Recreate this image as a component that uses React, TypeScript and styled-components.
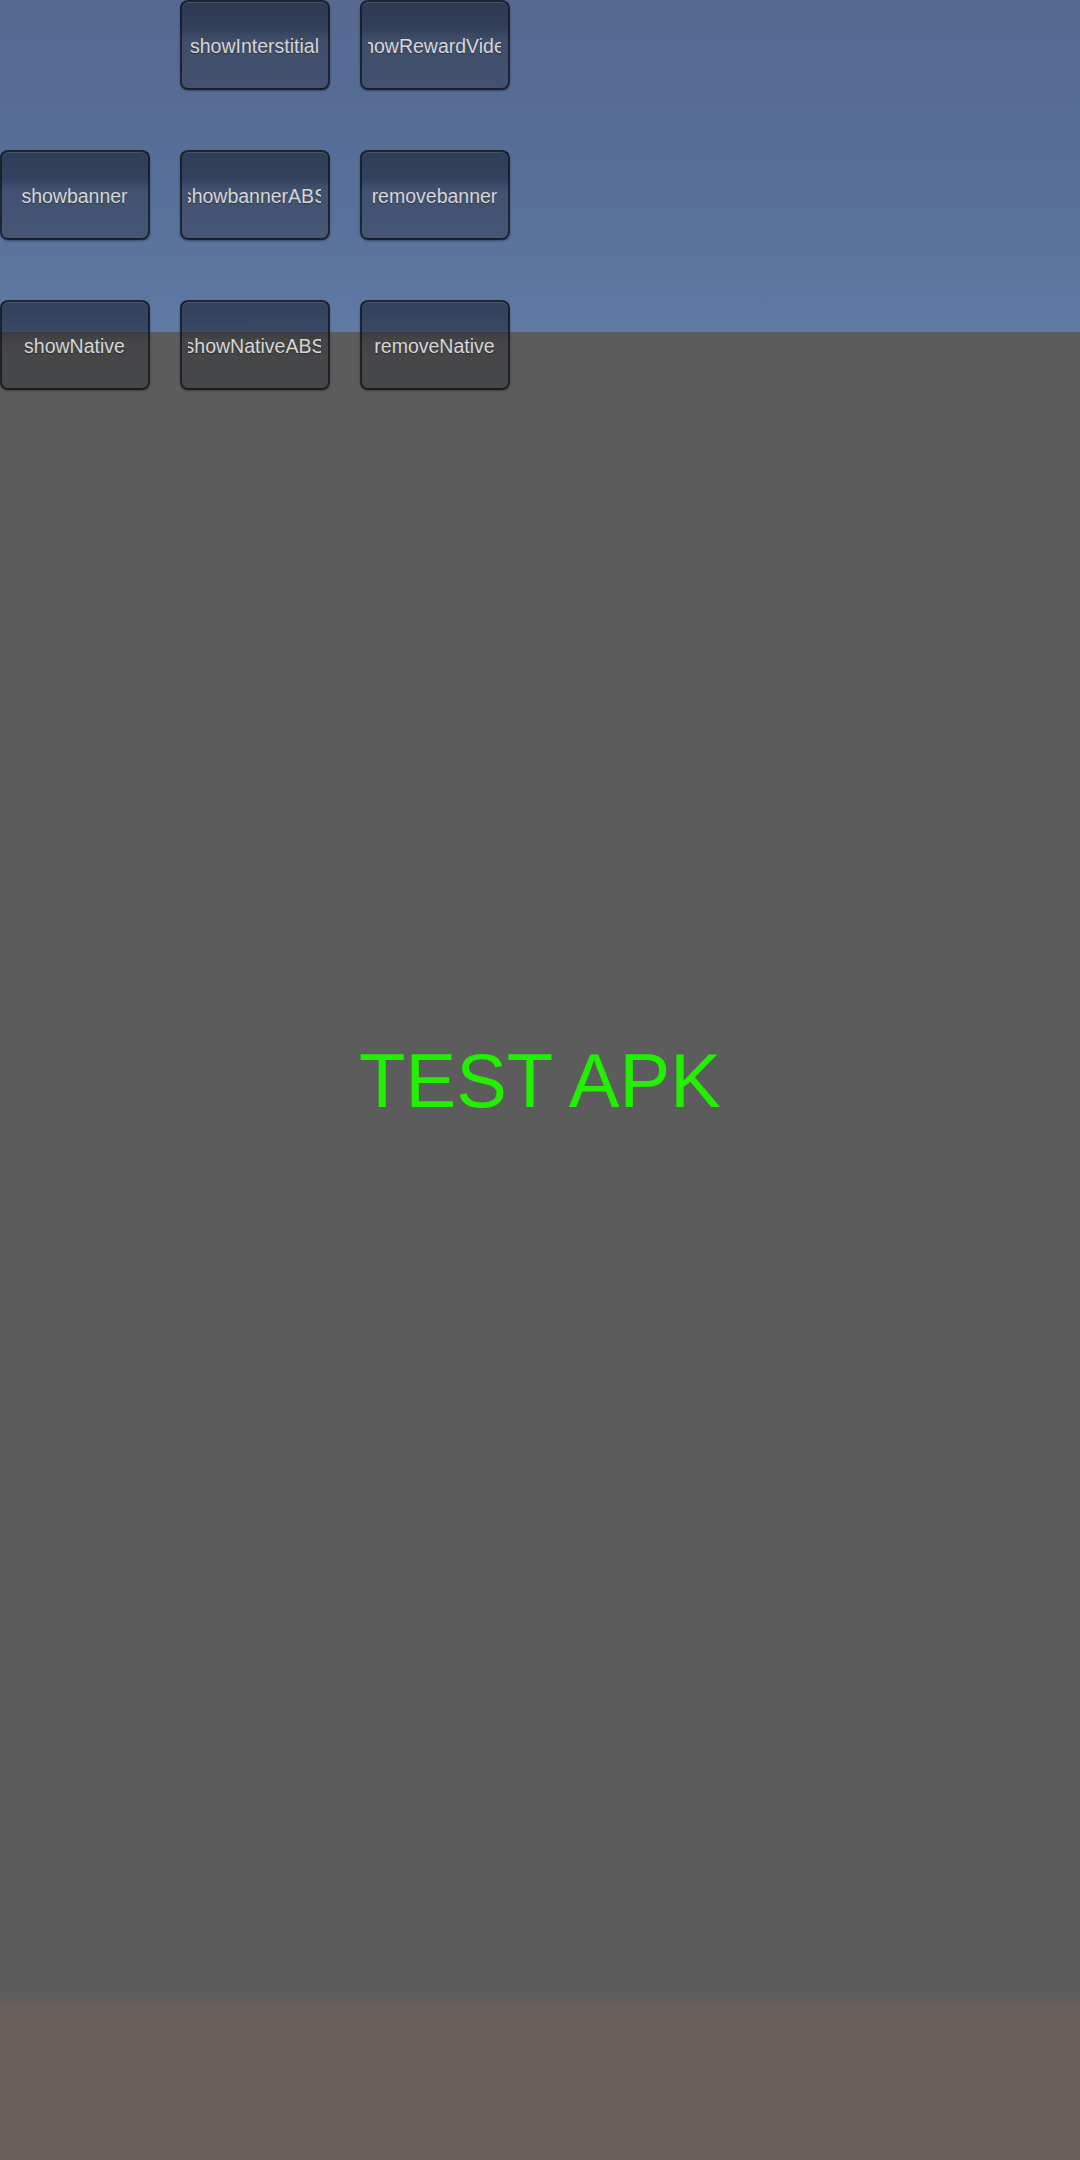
import styled, { createGlobalStyle } from "styled-components";

const GlobalStyle = createGlobalStyle`
	html, body {
		margin: 0;
		padding: 0;
		background: #5c5c5c;
		overflow: hidden;
	}
`;

const Screen = styled.main`
	position: relative;
	width: 1080px;
	height: 2160px;
	overflow: hidden;
	font-family: "Liberation Sans", Arial, sans-serif;
`;

const Scene = styled.div`
	display: flex;
	flex-direction: column;
	height: 100%;
`;

const Sky = styled.div`
	height: 332px;
	flex-shrink: 0;
	background: linear-gradient(180deg, #556890 0%, #57709a 60%, #5f7aa4 100%);
`;

const Ground = styled.div`
	flex: 1;
	background: #5c5c5c;
`;

const Floor = styled.div`
	height: 161px;
	flex-shrink: 0;
	background: linear-gradient(180deg, #5f5d5c 0px, #69605b 6px, #69605b 100%);
`;

const Overlay = styled.div`
	position: absolute;
	inset: 0;
	display: flex;
	flex-direction: column;
`;

const ButtonGrid = styled.div`
	display: grid;
	grid-template-columns: repeat(3, 150px);
	grid-auto-rows: 90px;
	column-gap: 30px;
	row-gap: 60px;
`;

const GuiButton = styled.button`
	box-sizing: border-box;
	display: flex;
	align-items: center;
	padding: 3px 7px 0 6px;
	margin: 0;
	border: 2px solid rgba(18, 22, 30, 0.75);
	border-radius: 8px;
	background: linear-gradient(
		180deg,
		rgba(8, 12, 22, 0.5) 0%,
		rgba(8, 12, 22, 0.45) 30%,
		rgba(28, 30, 36, 0.36) 45%,
		rgba(28, 30, 36, 0.33) 100%
	);
	box-shadow: inset 0 1px 0 rgba(255, 255, 255, 0.12), 0 1px 2px rgba(0, 0, 0, 0.35);
	cursor: pointer;
`;

const LabelClip = styled.span`
	flex: 1;
	display: flex;
	justify-content: center;
	overflow: hidden;
`;

const Label = styled.span`
	flex-shrink: 0;
	white-space: nowrap;
	font-family: "Liberation Sans", Arial, sans-serif;
	font-size: 19.5px;
	color: #d6d6d6;
	text-shadow: 0 1px 1px rgba(0, 0, 0, 0.35);
`;

const EmptyCell = styled.div``;

const TitleArea = styled.div`
	position: absolute;
	inset: 0;
	display: flex;
	align-items: center;
	justify-content: center;
	pointer-events: none;
`;

const Title = styled.h1`
	margin: 0;
	font-family: "Liberation Sans", Arial, sans-serif;
	font-weight: 400;
	font-size: 76px;
	color: #22f000;
`;

const rows: (string | null)[][] = [
	[null, "showInterstitial", "showRewardVideo"],
	["showbanner", "showbannerABS", "removebanner"],
	["showNative", "showNativeABS", "removeNative"],
];

const App = () => {
	return (
		<>
			<GlobalStyle />
			<Screen>
				<Scene>
					<Sky />
					<Ground />
					<Floor />
				</Scene>

				<TitleArea>
					<Title>TEST APK</Title>
				</TitleArea>

				{/* GUI buttons */}
				<Overlay>
					<ButtonGrid>
						{rows.flat().map((label, idx) =>
							label ? (
								<GuiButton key={idx}>
									<LabelClip>
										<Label>{label}</Label>
									</LabelClip>
								</GuiButton>
							) : (
								<EmptyCell key={idx} />
							)
						)}
					</ButtonGrid>
				</Overlay>
			</Screen>
		</>
	);
};

export default App;
